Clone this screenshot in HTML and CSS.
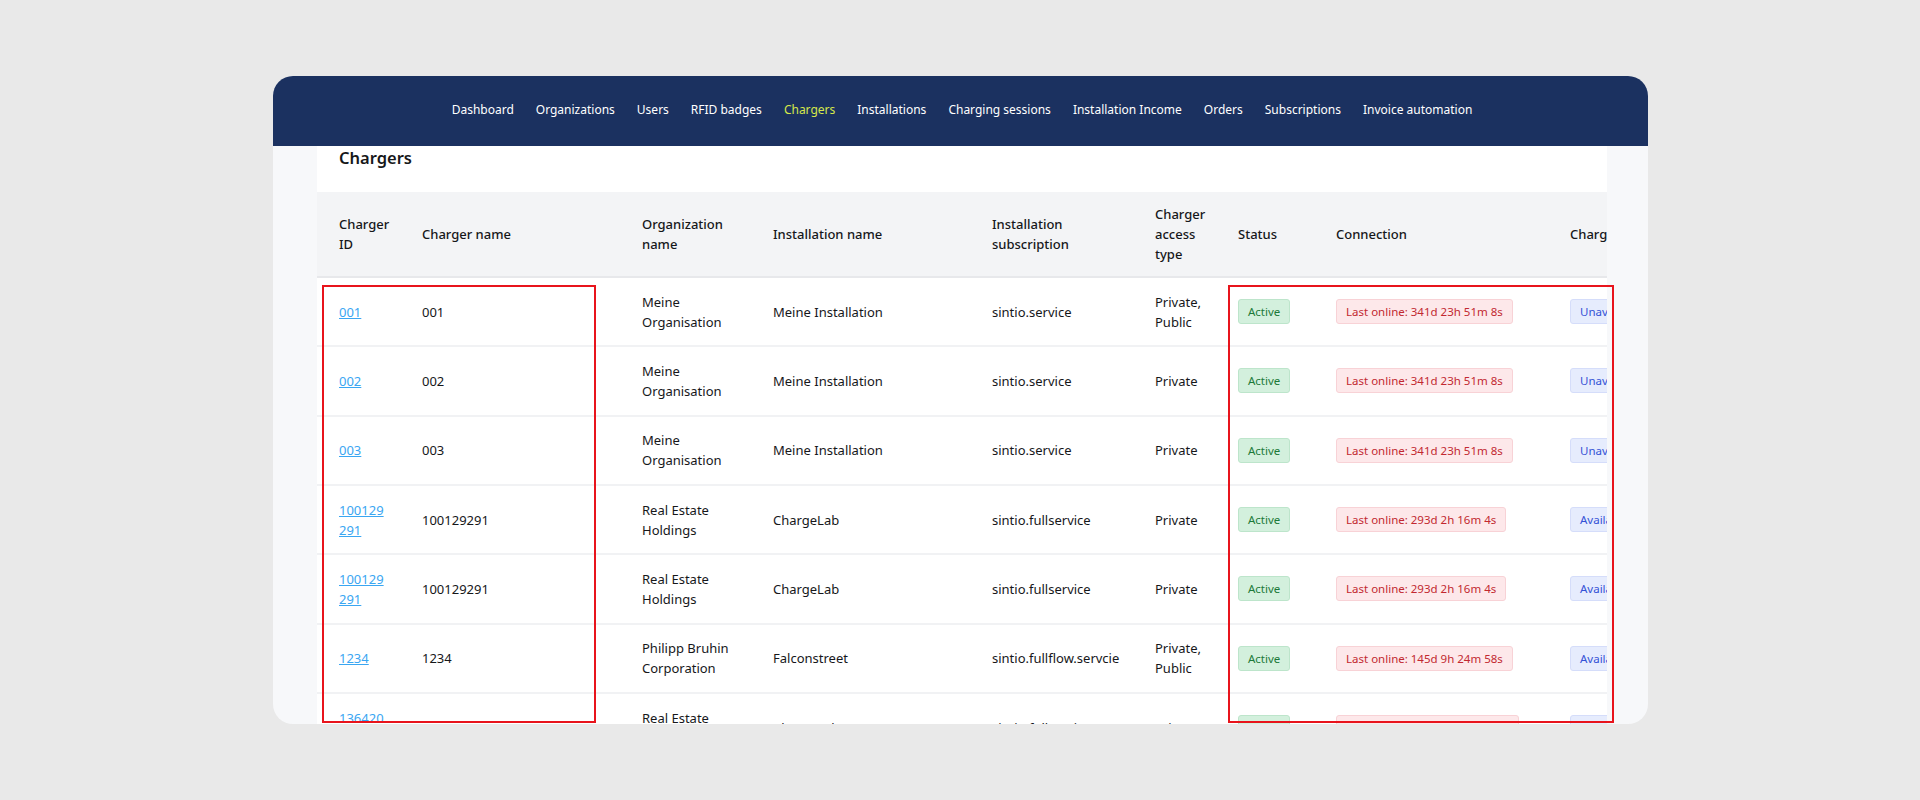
FILE: index.html
```html
<!DOCTYPE html>
<html lang="en">
<head>
<meta charset="utf-8">
<title>Chargers</title>
<link rel="stylesheet" href="styles.css">
</head>
<body>
<div class="card">
  <nav class="nav">
    <a class="nav-item">Dashboard</a>
    <a class="nav-item">Organizations</a>
    <a class="nav-item">Users</a>
    <a class="nav-item">RFID badges</a>
    <a class="nav-item active">Chargers</a>
    <a class="nav-item">Installations</a>
    <a class="nav-item">Charging sessions</a>
    <a class="nav-item">Installation Income</a>
    <a class="nav-item">Orders</a>
    <a class="nav-item">Subscriptions</a>
    <a class="nav-item">Invoice automation</a>
  </nav>
  <main class="content">
    <section class="panel">
      <h1 class="title">Chargers</h1>
      <table class="table">
        <colgroup>
          <col class="c-id"><col class="c-name"><col class="c-org"><col class="c-inst"><col class="c-sub"><col class="c-access"><col class="c-status"><col class="c-conn"><col class="c-charge">
        </colgroup>
        <thead>
          <tr>
            <th>Charger ID</th>
            <th>Charger name</th>
            <th>Organization name</th>
            <th>Installation name</th>
            <th>Installation subscription</th>
            <th>Charger access type</th>
            <th>Status</th>
            <th>Connection</th>
            <th>Charging status</th>
          </tr>
        </thead>
        <tbody>
          <tr>
            <td><a class="id-link" href="#">001</a></td>
            <td>001</td>
            <td>Meine Organisation</td>
            <td>Meine Installation</td>
            <td>sintio.service</td>
            <td>Private, Public</td>
            <td><span class="badge green">Active</span></td>
            <td><span class="badge red">Last online: 341d 23h 51m 8s</span></td>
            <td><span class="badge blue">Unavailable</span></td>
          </tr>
          <tr>
            <td><a class="id-link" href="#">002</a></td>
            <td>002</td>
            <td>Meine Organisation</td>
            <td>Meine Installation</td>
            <td>sintio.service</td>
            <td>Private</td>
            <td><span class="badge green">Active</span></td>
            <td><span class="badge red">Last online: 341d 23h 51m 8s</span></td>
            <td><span class="badge blue">Unavailable</span></td>
          </tr>
          <tr>
            <td><a class="id-link" href="#">003</a></td>
            <td>003</td>
            <td>Meine Organisation</td>
            <td>Meine Installation</td>
            <td>sintio.service</td>
            <td>Private</td>
            <td><span class="badge green">Active</span></td>
            <td><span class="badge red">Last online: 341d 23h 51m 8s</span></td>
            <td><span class="badge blue">Unavailable</span></td>
          </tr>
          <tr>
            <td><a class="id-link" href="#">100129291</a></td>
            <td>100129291</td>
            <td>Real Estate Holdings</td>
            <td>ChargeLab</td>
            <td>sintio.fullservice</td>
            <td>Private</td>
            <td><span class="badge green">Active</span></td>
            <td><span class="badge red">Last online: 293d 2h 16m 4s</span></td>
            <td><span class="badge blue">Available</span></td>
          </tr>
          <tr>
            <td><a class="id-link" href="#">100129291</a></td>
            <td>100129291</td>
            <td>Real Estate Holdings</td>
            <td>ChargeLab</td>
            <td>sintio.fullservice</td>
            <td>Private</td>
            <td><span class="badge green">Active</span></td>
            <td><span class="badge red">Last online: 293d 2h 16m 4s</span></td>
            <td><span class="badge blue">Available</span></td>
          </tr>
          <tr>
            <td><a class="id-link" href="#">1234</a></td>
            <td>1234</td>
            <td>Philipp Bruhin Corporation</td>
            <td>Falconstreet</td>
            <td>sintio.fullflow.servcie</td>
            <td>Private, Public</td>
            <td><span class="badge green">Active</span></td>
            <td><span class="badge red">Last online: 145d 9h 24m 58s</span></td>
            <td><span class="badge blue">Available</span></td>
          </tr>
          <tr>
            <td><a class="id-link" href="#">136420588</a></td>
            <td>136420588</td>
            <td>Real Estate Holdings</td>
            <td>ChargeLab</td>
            <td>sintio.fullservice</td>
            <td>Private</td>
            <td><span class="badge green">Active</span></td>
            <td><span class="badge red">Last online: 287d 10h 43m 12s</span></td>
            <td><span class="badge blue">Available</span></td>
          </tr>
        </tbody>
      </table>
    </section>
  </main>
  <div class="mark mark-left"></div>
  <div class="mark mark-right"></div>
</div>
</body>
</html>
```

FILE: styles.css
```css
* { box-sizing: border-box; }

html, body {
  margin: 0;
  padding: 0;
}

body {
  background: #e9e9e9;
  font-family: "Noto Sans", "Open Sans", sans-serif;
  color: #1b1c20;
  height: 800px;
  overflow: hidden;
}

.card {
  position: relative;
  width: 1375px;
  height: 648px;
  margin: 76px 0 0 273px;
  border-radius: 20px;
  overflow: hidden;
  background: #f7f8fa;
  display: flex;
  flex-direction: column;
}

.nav {
  flex: 0 0 70px;
  background: #1b3160;
  display: flex;
  justify-content: center;
  align-items: center;
  gap: 22px;
  padding: 0 0 2px 3px;
}

.nav-item {
  color: #ffffff;
  font-size: 12px;
  line-height: 18px;
  text-decoration: none;
}

.nav-item.active {
  color: #d6e84a;
}

.content {
  flex: 1;
  padding: 0 41px 0 44px;
  overflow: hidden;
}

.panel {
  background: #ffffff;
  height: 100%;
  overflow: hidden;
}

.title {
  margin: 0;
  height: 46px;
  padding: 0 0 0 22px;
  font-size: 16.5px;
  line-height: 24px;
  font-weight: 600;
  color: #16171a;
}

.table {
  table-layout: fixed;
  border-collapse: collapse;
  width: 1501px;
  font-size: 13px;
  line-height: 20px;
}

.c-id { width: 83px; }
.c-name { width: 220px; }
.c-org { width: 131px; }
.c-inst { width: 219px; }
.c-sub { width: 163px; }
.c-access { width: 83px; }
.c-status { width: 98px; }
.c-conn { width: 234px; }
.c-charge { width: 270px; }

.table th {
  background: #f3f4f6;
  text-align: left;
  font-weight: 500;
  color: #16171a;
  padding: 12px 12px 12px 22px;
  vertical-align: middle;
  border-bottom: 2px solid #e7e8eb;
}

.table td {
  padding: 13.67px 12px 13.67px 22px;
  vertical-align: middle;
  border-bottom: 2px solid #f1f2f4;
  color: #16171a;
  white-space: normal;
}

.id-link {
  color: #3aa6f2;
  text-decoration: underline;
  word-break: break-all;
}

.badge {
  display: inline-block;
  font-size: 11.5px;
  line-height: 23px;
  padding: 0 9px;
  border-radius: 3px;
  border: 1px solid transparent;
  white-space: nowrap;
}

.badge.green {
  background: #d3f0dd;
  border-color: #bde5cb;
  color: #1c7a3a;
}

.badge.red {
  background: #fde8ea;
  border-color: #f8d2d6;
  color: #c22830;
}

.badge.blue {
  background: #e6ecfd;
  border-color: #d5ddfa;
  color: #3452d6;
}

.mark {
  position: absolute;
  top: 209px;
  bottom: 1px;
  border: 2px solid #e8141c;
  pointer-events: none;
}

.mark-left {
  left: 49px;
  width: 274px;
}

.mark-right {
  left: 955px;
  width: 386px;
}
```
